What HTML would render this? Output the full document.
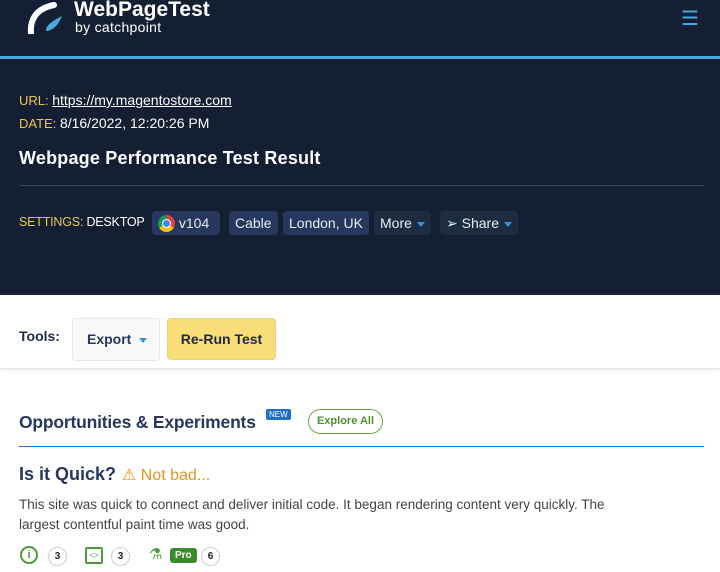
<!DOCTYPE html>
<html><head><style>
*{margin:0;padding:0;box-sizing:border-box}
body{width:720px;height:572px;overflow:hidden;background:#fff;font-family:"Liberation Sans",sans-serif;color:#222}
.hdr{position:absolute;left:0;top:0;width:720px;height:295px;background:#141f33}
.blue{position:absolute;left:0;top:56px;width:720px;height:3px;background:#4aa8dc}
.t{position:absolute;white-space:nowrap}
.pill{position:absolute;top:211px;height:24px;border-radius:4px;background:#27375e;color:#e8ecf4;font-size:14px;line-height:24px;padding:0 6px;white-space:nowrap}
.pill.d{background:#1c2d42}
.tri{display:inline-block;width:0;height:0;border-left:4px solid transparent;border-right:4px solid transparent;border-top:5px solid #3b8fd6;vertical-align:middle;margin-left:5px}
.cnt{position:absolute;top:547px;width:19px;height:19px;border:1px solid #ccc;border-radius:50%;font-size:10px;font-weight:bold;text-align:center;line-height:17px}
</style></head><body>
<div class="hdr"></div>
<svg class="t" style="left:26px;top:2px" width="40" height="32" viewBox="0 0 40 32"><path d="M5 32 Q3 8 28 3" fill="none" stroke="#fff" stroke-width="6" stroke-linecap="round"/><path d="M20 28 Q20 22 36 14 Q31 26 24 28 Q20 30 20 28Z" fill="#4aa8dc"/></svg>
<div class="t" style="left:74px;top:-2px;color:#fff;font-size:21px;font-weight:bold">WebPageTest</div>
<div class="t" style="left:75px;top:19px;color:#fff;font-size:14px;letter-spacing:0.3px">by catchpoint</div>
<div class="t" style="left:681px;top:6px;color:#4aa8dc;font-size:20px">☰</div>
<div class="blue"></div>
<div class="t" style="left:19px;top:92px;font-size:13px;color:#e8c75a">URL: <span style="color:#fff;text-decoration:underline;font-size:14px">https://my.magentostore.com</span></div>
<div class="t" style="left:19px;top:115px;font-size:13px;color:#e8c75a">DATE: <span style="color:#fff;font-size:14px">8/16/2022, 12:20:26 PM</span></div>
<div class="t" style="left:19px;top:148px;font-size:18px;font-weight:bold;color:#fff;letter-spacing:0.2px">Webpage Performance Test Result</div>
<div class="t" style="left:19px;top:185px;width:685px;height:1px;background:#36435a"></div>
<div class="t" style="left:19px;top:215px;font-size:12.5px;color:#e8c75a;letter-spacing:-0.2px">SETTINGS: <span style="color:#fff">DESKTOP</span></div>
<div class="pill" style="left:152px;width:68px"><span style="display:inline-block;width:17px;height:17px;border-radius:50%;background:conic-gradient(#db4437 0 120deg,#f4c20d 120deg 240deg,#0f9d58 240deg);vertical-align:-4px;position:relative"><span style="position:absolute;left:4px;top:4px;width:9px;height:9px;border-radius:50%;background:#4285f4;border:1.5px solid #fff"></span></span> v104</div>
<div class="pill" style="left:229px">Cable</div>
<div class="pill" style="left:283px">London, UK</div>
<div class="pill d" style="left:374px">More<span class="tri"></span></div>
<div class="pill d" style="left:440px">➢ Share<span class="tri"></span></div>
<div class="t" style="left:0;top:295px;width:720px;height:74px;border-bottom:1px solid #e6e6e6;box-shadow:0 2px 3px #eee"></div>
<div class="t" style="left:19px;top:328px;font-size:14px;font-weight:bold;color:#1e2a44">Tools:</div>
<div class="t" style="left:72px;top:318px;width:88px;height:43px;border:1px solid #e6e6e6;border-radius:4px;background:#f8f8f9;font-size:14px;font-weight:bold;color:#27375e;line-height:41px;padding-left:14px">Export<span class="tri" style="margin-left:8px"></span></div>
<div class="t" style="left:167px;top:318px;width:109px;height:42px;border:1px solid #ecd27a;border-radius:4px;background:#f8dd78;font-size:14px;font-weight:bold;color:#1e2a44;line-height:40px;text-align:center">Re-Run Test</div>
<div class="t" style="left:19px;top:412px;font-size:17.5px;font-weight:bold;color:#27375e;letter-spacing:-0.2px">Opportunities &amp; Experiments</div>
<div class="t" style="left:266px;top:409px;background:#1f6fc0;color:#fff;font-size:8px;padding:1px 3px;border-radius:2px">NEW</div>
<div class="t" style="left:308px;top:409px;width:75px;height:25px;border:1.5px solid #6aa84f;border-radius:13px;color:#4f8f2f;font-size:11px;font-weight:bold;text-align:center;line-height:22px">Explore All</div>
<div class="t" style="left:19px;top:446px;width:685px;height:1px;background:#1f6fc0"></div>
<div class="t" style="left:19px;top:464px;font-size:18px;font-weight:bold;color:#27375e">Is it Quick?</div>
<div class="t" style="left:122px;top:465px;font-size:16px;color:#e3931f">⚠ Not bad...</div>
<div class="t" style="left:19px;top:495px;font-size:13.5px;line-height:20px;color:#444;white-space:normal;width:600px">This site was quick to connect and deliver initial code. It began rendering content very quickly. The largest contentful paint time was good.</div>
<div class="t" style="left:20px;top:546px;width:18px;height:18px;border:2px solid #4f9a3a;border-radius:50%;color:#4f9a3a;font-size:11px;font-weight:bold;text-align:center;line-height:14px">i</div>
<div class="cnt" style="left:48px">3</div>
<div class="t" style="left:85px;top:547px;width:18px;height:17px;border:2px solid #4f9a3a;border-radius:2px;color:#4f9a3a;font-size:8px;text-align:center;line-height:13px">&lt;&gt;</div>
<div class="cnt" style="left:111px">3</div>
<div class="t" style="left:149px;top:545px;color:#4f9a3a;font-size:15px">⚗</div>
<div class="t" style="left:170px;top:548px;background:#3c8a2a;color:#fff;font-size:10px;font-weight:bold;padding:2px 5px;border-radius:3px">Pro</div>
<div class="cnt" style="left:201px">6</div>
</body></html>
